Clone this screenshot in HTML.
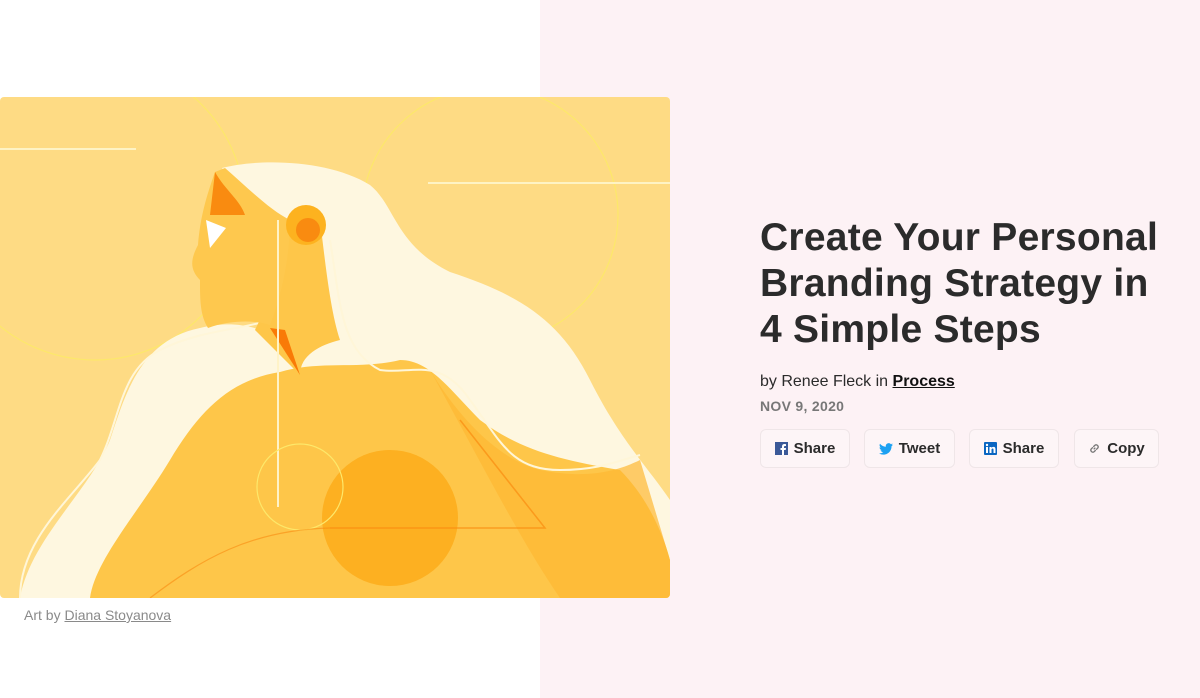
<!DOCTYPE html>
<html><head><meta charset="utf-8"><style>
*{margin:0;padding:0;box-sizing:border-box}
body{width:1200px;height:698px;position:relative;background:#fff;font-family:"Liberation Sans",Arial,sans-serif;overflow:hidden}
.pink{position:absolute;left:540px;top:0;width:660px;height:698px;background:#fdf2f5}
svg.art{position:absolute;left:0;top:97px}
.cap{position:absolute;left:24px;top:607px;font-size:14px;color:#8a8a8a}
.cap u{color:#8a8a8a}
h1{position:absolute;left:760px;top:215px;width:408px;font-size:39px;line-height:46px;font-weight:bold;color:#2b2b2b;letter-spacing:0.25px}
.by{position:absolute;left:760px;top:373px;font-size:16px;color:#2b2b2b}
.by u{font-weight:bold;color:#111}
.date{position:absolute;left:760px;top:398px;font-size:14px;font-weight:bold;color:#777;letter-spacing:.3px}
.btn{position:absolute;top:429px;height:39px;border:1px solid #efe6e8;border-radius:6px;background:#fdf5f7;font-size:15px;font-weight:bold;color:#2b2b2b;display:flex;align-items:center;justify-content:center;gap:6px}
</style></head><body>
<div class="pink"></div>
<svg class="art" width="670" height="501" viewBox="0 97 670 501">
<defs><clipPath id="c"><rect x="0" y="97" width="670" height="501" rx="4"/></clipPath></defs>
<g clip-path="url(#c)">
<rect x="0" y="97" width="670" height="501" fill="#fedb84"/>
<circle cx="490" cy="215" r="128" fill="none" stroke="#fde86a" stroke-width="1.2"/>
<circle cx="95" cy="210" r="150" fill="none" stroke="#fde86a" stroke-width="1.2"/>
<line x1="0" y1="149" x2="136" y2="149" stroke="#fef3c4" stroke-width="2"/>
<line x1="428" y1="183" x2="670" y2="183" stroke="#fef3c4" stroke-width="2"/>
<path d="M222,168 C260,158 330,160 370,185 C395,205 395,245 450,272 C520,295 560,320 590,380 C620,440 650,470 670,500 L670,598 L20,598 C30,540 90,490 110,440 C125,395 140,340 200,328 C240,318 270,330 300,350 L320,330 Z" fill="#fef7e0"/>
<path d="M20,598 C20,540 70,500 100,460 C120,420 120,370 160,350 C200,330 240,330 270,320" fill="none" stroke="#fff6d8" stroke-width="2"/>
<path d="M90,598 C95,560 140,510 170,460 C200,410 230,380 280,372 C320,360 360,370 400,360 C430,360 450,390 480,420 C520,450 560,460 620,470 C650,500 665,540 670,560 L670,598 Z" fill="#fec649"/>
<path d="M430,370 C460,420 500,460 540,470 C590,480 620,470 640,460 L670,560 L670,598 L560,598 C520,540 480,460 430,370 Z" fill="#fdb833" opacity=".7"/>
<circle cx="390" cy="518" r="68" fill="#fdab1a" opacity=".85"/>
<path d="M255,330 C270,300 280,270 285,230 L320,220 C325,260 330,310 340,340 C320,345 300,355 300,375 Z" fill="#fec649"/>
<path d="M270,328 L300,375 L285,330 Z" fill="#f97a07"/>
<path d="M215,172 C205,200 200,220 198,245 C190,260 190,270 200,280 C200,300 200,315 208,328 C230,320 255,320 270,325 C280,300 290,260 290,220 C270,210 250,190 225,168 Z" fill="#fec84e"/>
<path d="M215,172 C225,190 240,200 245,215 L210,215 Z" fill="#f98b10"/>
<path d="M206,220 L226,228 L210,248 Z" fill="#fff"/>
<circle cx="306" cy="225" r="20" fill="#fdb21f"/>
<circle cx="308" cy="230" r="12" fill="#f98b10"/>
<line x1="278" y1="220" x2="278" y2="507" stroke="#fff3c8" stroke-width="2"/>
<circle cx="300" cy="487" r="43" fill="none" stroke="#fde86a" stroke-width="1.2"/>
<path d="M330,528 L545,528 L460,420" fill="none" stroke="#f98b10" stroke-width="1.5" opacity=".7"/>
<path d="M150,598 C200,560 250,530 330,528" fill="none" stroke="#f98b10" stroke-width="1.2" opacity=".6"/>
<path d="M330,240 C340,300 340,350 380,370 C410,375 440,355 470,400 C500,440 510,470 560,470 C600,470 620,460 640,455" fill="none" stroke="#fff6d8" stroke-width="2"/>
</g>
</svg>
<div class="cap">Art by <u>Diana Stoyanova</u></div>
<h1>Create Your Personal Branding Strategy in 4 Simple Steps</h1>
<div class="by">by Renee Fleck in <u>Process</u></div>
<div class="date">NOV 9, 2020</div>
<div class="btn" style="left:760px;width:90px"><svg width="13" height="13" viewBox="0 0 13 13"><rect width="13" height="13" fill="#3b5998"/><path d="M9,13V8h1.7l.3-2H9V5c0-.6.2-1 1-1h1V2.2C10.6,2.1,10,2,9.4,2,8,2,7,2.9,7,4.5V6H5.5v2H7v5z" fill="#fff"/></svg>Share</div>
<div class="btn" style="left:864px;width:91px"><svg width="14" height="12" viewBox="0 0 24 20"><path d="M24,2.4a10,10,0,0,1-2.8.8A4.9,4.9,0,0,0,23.3.5a9.8,9.8,0,0,1-3.1,1.2A4.9,4.9,0,0,0,11.8,6.1,14,14,0,0,1,1.7,1a4.9,4.9,0,0,0,1.5,6.6A4.9,4.9,0,0,1,1,7v.1a4.9,4.9,0,0,0,3.9,4.8,4.9,4.9,0,0,1-2.2.1,4.9,4.9,0,0,0,4.6,3.4A9.9,9.9,0,0,1,0,17.5,14,14,0,0,0,7.5,19.7c9,0,14-7.5,14-14V5A10,10,0,0,0,24,2.4Z" fill="#1da1f2"/></svg>Tweet</div>
<div class="btn" style="left:969px;width:90px"><svg width="13" height="13" viewBox="0 0 13 13"><rect width="13" height="13" rx="1" fill="#0a66c2"/><rect x="2" y="5" width="2" height="6" fill="#fff"/><circle cx="3" cy="3" r="1.2" fill="#fff"/><path d="M5.5,5h2v1c.4-.7 1.1-1.1 2-1.1 1.5 0 2 1 2 2.5V11h-2V7.8c0-.8-.2-1.3-.9-1.3s-1.1.5-1.1 1.3V11h-2z" fill="#fff"/></svg>Share</div>
<div class="btn" style="left:1074px;width:85px"><svg width="13" height="13" viewBox="0 0 16 16" fill="none" stroke="#777" stroke-width="1.6"><path d="M7,9 L9,7"/><path d="M6,6.5 L4,8.5 a2.5,2.5 0 0 0 3.5,3.5 L9.5,10"/><path d="M10,9.5 L12,7.5 a2.5,2.5 0 0 0 -3.5,-3.5 L6.5,6"/></svg>Copy</div>
</body></html>
